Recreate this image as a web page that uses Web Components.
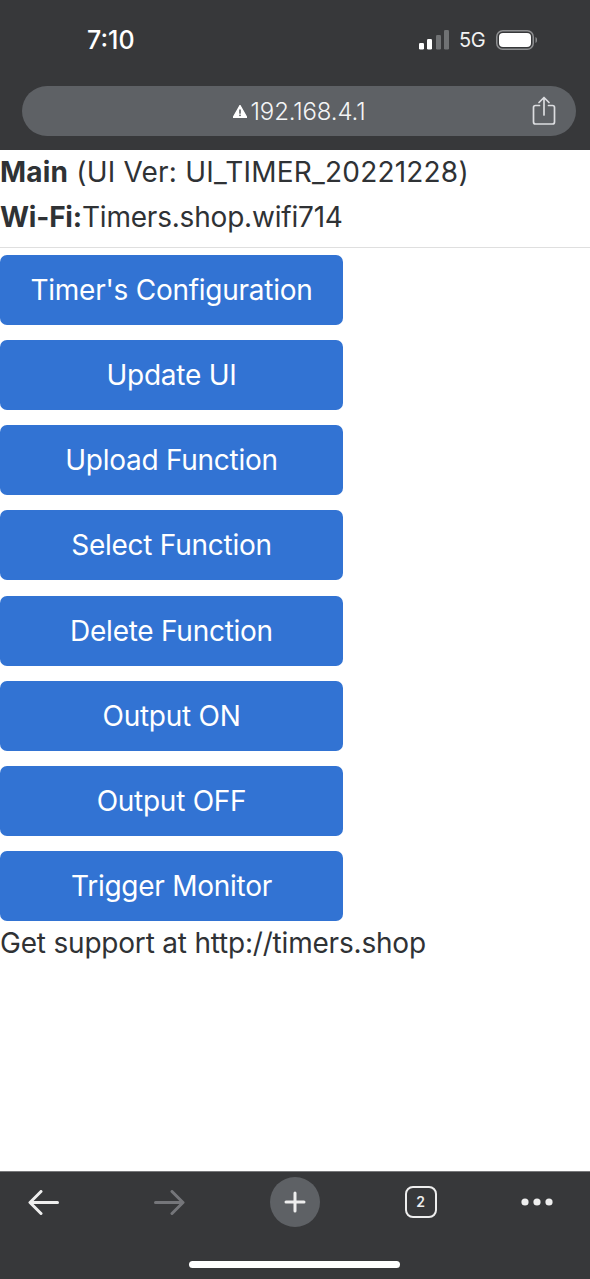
<!DOCTYPE html>
<html lang="en">
<head>
<meta charset="utf-8">
<title>Main</title>
<style>
  html, body { margin: 0; padding: 0; background: #fff; }
  body { font-family: Inter, "Liberation Sans", sans-serif; width: 590px; height: 1279px; overflow: hidden; }
  app-screen { height: 1279px; }
  .wide { --track: 0.2px; }
</style>
</head>
<body>
<app-screen>
  <browser-top slot="top" time="7:10" address="192.168.4.1"></browser-top>
  <info-line class="wide"><b>Main</b> (UI Ver: UI_TIMER_20221228)</info-line>
  <info-line><b>Wi-Fi:</b>Timers.shop.wifi714</info-line>
  <page-rule></page-rule>
  <action-button>Timer's Configuration</action-button>
  <action-button>Update UI</action-button>
  <action-button>Upload Function</action-button>
  <action-button>Select Function</action-button>
  <action-button>Delete Function</action-button>
  <action-button>Output ON</action-button>
  <action-button>Output OFF</action-button>
  <action-button>Trigger Monitor</action-button>
  <info-line>Get support at http://timers.shop</info-line>
  <browser-bottom slot="bottom" tabs="2"></browser-bottom>
</app-screen>

<script>
// Page frame: browser chrome on top and bottom, the web content between them
class AppScreen extends HTMLElement {
  constructor() {
    super();
    this.attachShadow({ mode: 'open' });
    this.shadowRoot.innerHTML = `
      <style>
        :host { display: flex; flex-direction: column; width: 590px; }
        main { flex: 1; display: flex; flex-direction: column; background: #fff; min-height: 0; }
      </style>
      <slot name="top"></slot>
      <main><slot></slot></main>
      <slot name="bottom"></slot>
    `;
  }
}

class BrowserTop extends HTMLElement {
  constructor() {
    super();
    this.attachShadow({ mode: 'open' });
    const time = this.getAttribute('time');
    const address = this.getAttribute('address');
    this.shadowRoot.innerHTML = `
      <style>
        :host { display: block; height: 150px; box-sizing: border-box; padding: 0 14px 14px 22px; background: #37383a; color: #fff; }
        .status { height: 86px; box-sizing: border-box; padding: 24px 38px 0 65px; display: flex; align-items: flex-start; justify-content: space-between; }
        .time { font-size: 25px; line-height: 32px; font-weight: 500; width: 50px; }
        .right { display: flex; align-items: center; height: 32px; }
        .net { font-size: 20px; font-weight: 400; line-height: 32px; color: #f2f2f2; width: 26px; margin: 0 11px 0 10px; letter-spacing: -0.3px; white-space: nowrap; }
        svg { display: block; }
        .pill { height: 50px; border-radius: 25px; background: #5e6165; display: flex; align-items: center; position: relative; justify-content: center; }
        .addr { display: flex; align-items: center; gap: 4px; font-size: 24px; font-weight: 300; color: #f4f5f6; }
        .addr span { letter-spacing: -0.15px; }
        .share { position: absolute; right: 20px; top: 10px; }
      </style>
      <div class="status">
        <div class="time">${time}</div>
        <div class="right">
          <svg width="30" height="20" viewBox="0 0 30 20">
            <rect x="0" y="13" width="5" height="6.5" rx="1.2" fill="#fff"/>
            <rect x="8" y="9" width="5" height="10.5" rx="1.2" fill="#fff"/>
            <rect x="17" y="5" width="5" height="14.5" rx="1.2" fill="#707274"/>
            <rect x="25" y="0" width="5" height="19.5" rx="1.2" fill="#707274"/>
          </svg>
          <span class="net">5G</span>
          <svg width="42" height="20" viewBox="0 0 42 20">
            <rect x="0.75" y="0.75" width="36.5" height="18.5" rx="6" fill="none" stroke="#8e8f91" stroke-width="1.5"/>
            <rect x="3" y="3" width="32" height="14" rx="4" fill="#fff"/>
            <path d="M39.5 7 C41.5 7.6 41.5 12.4 39.5 13 Z" fill="#8e8f91"/>
          </svg>
        </div>
      </div>
      <div class="pill">
        <div class="addr">
          <svg width="14" height="13" viewBox="0 0 14 13">
            <path d="M7 0.5 L13.8 12.5 L0.2 12.5 Z" fill="#fff" stroke="#fff" stroke-width="1.4" stroke-linejoin="round"/>
            <rect x="6.2" y="4.5" width="1.6" height="4.2" fill="#5e6165"/>
            <rect x="6.2" y="9.6" width="1.6" height="1.5" fill="#5e6165"/>
          </svg>
          <span>${address}</span>
        </div>
        <svg class="share" width="24" height="30" viewBox="0 0 24 30" fill="none" stroke="#dcdde0" stroke-width="1.7" stroke-linecap="round" stroke-linejoin="round">
          <path d="M7.5 9.5 H3.5 a2 2 0 0 0 -2 2 V26 a2 2 0 0 0 2 2 H20.5 a2 2 0 0 0 2 -2 V11.5 a2 2 0 0 0 -2 -2 H16.5"/>
          <path d="M12 19 V2 M7 6.5 L12 1.5 L17 6.5"/>
        </svg>
      </div>
    `;
  }
}

// One line of plain page text, bold parts come in through the slot
const infoTemplate = document.createElement('template');
infoTemplate.innerHTML = `
  <style>
    :host { display: block; font-size: 28px; line-height: 45px; height: 45px; color: #2f3235; white-space: nowrap; letter-spacing: var(--track, -0.2px); }
    ::slotted(b) { font-weight: 700; }
  </style>
  <slot></slot>
`;
class InfoLine extends HTMLElement {
  constructor() {
    super();
    this.attachShadow({ mode: 'open' });
    this.shadowRoot.appendChild(infoTemplate.content.cloneNode(true));
  }
}

class PageRule extends HTMLElement {
  constructor() {
    super();
    this.attachShadow({ mode: 'open' });
    this.shadowRoot.innerHTML = `
      <style>
        :host { display: block; height: 1px; margin: 7px 0 7px; background: #dfdfdf; }
      </style>
    `;
  }
}

const buttonTemplate = document.createElement('template');
buttonTemplate.innerHTML = `
  <style>
    :host { display: block; width: 343px; margin-bottom: 15.15px; }
    :host(:last-of-type) { margin-bottom: 0; }
    button {
      display: block; width: 100%; height: 70px; padding: 0; border: 0; border-radius: 7px;
      background: #3273d3; color: #fff; font: 400 28px/40px Inter, "Liberation Sans", sans-serif;
      letter-spacing: -0.26px; text-align: center;
    }
  </style>
  <button type="button"><slot></slot></button>
`;
class ActionButton extends HTMLElement {
  constructor() {
    super();
    this.attachShadow({ mode: 'open' });
    this.shadowRoot.appendChild(buttonTemplate.content.cloneNode(true));
  }
}

class BrowserBottom extends HTMLElement {
  constructor() {
    super();
    this.attachShadow({ mode: 'open' });
    const tabs = this.getAttribute('tabs');
    this.shadowRoot.innerHTML = `
      <style>
        :host { display: block; height: 108px; box-sizing: border-box; background: #37383a; border-top: 1px solid #77787a; }
        .tools { height: 61px; padding-top: 5px; box-sizing: border-box; display: grid; grid-template-columns: 87px 165px 86px 165px 67px; }
        .tools > div { display: flex; align-items: center; justify-content: center; height: 50px; }
        svg { display: block; }
        .plus { width: 50px; height: 50px; border-radius: 50%; background: #5e6165; display: flex; align-items: center; justify-content: center; }
        .tabs { width: 32px; height: 32px; box-sizing: border-box; border: 2.5px solid #eeeeee; border-radius: 8px; color: #eee; font-size: 14px; font-weight: 600; line-height: 27px; text-align: center; }
        .home { width: 211px; height: 7px; border-radius: 4px; background: #fff; margin: 28px 0 0 189px; }
      </style>
      <div class="tools">
        <div>
          <svg width="31" height="25" viewBox="0 0 31 25" fill="none" stroke="#eee" stroke-width="3" stroke-linecap="round" stroke-linejoin="round">
            <path d="M29.5 12.5 H2.5 M13 1.5 L2 12.5 L13 23.5"/>
          </svg>
        </div>
        <div>
          <svg width="31" height="25" viewBox="0 0 31 25" fill="none" stroke="#75767a" stroke-width="3" stroke-linecap="round" stroke-linejoin="round">
            <path d="M1.5 12.5 H28.5 M18 1.5 L29 12.5 L18 23.5"/>
          </svg>
        </div>
        <div>
          <div class="plus">
            <svg width="22" height="22" viewBox="0 0 22 22" fill="none" stroke="#eee" stroke-width="3" stroke-linecap="round">
              <path d="M11 2 V20 M2 11 H20"/>
            </svg>
          </div>
        </div>
        <div><div class="tabs">${tabs}</div></div>
        <div>
          <svg width="32" height="8" viewBox="0 0 32 8" fill="#eee">
            <circle cx="4" cy="4" r="3.6"/><circle cx="16" cy="4" r="3.6"/><circle cx="28" cy="4" r="3.6"/>
          </svg>
        </div>
      </div>
      <div class="home"></div>
    `;
  }
}

customElements.define('app-screen', AppScreen);
customElements.define('browser-top', BrowserTop);
customElements.define('info-line', InfoLine);
customElements.define('page-rule', PageRule);
customElements.define('action-button', ActionButton);
customElements.define('browser-bottom', BrowserBottom);
</script>
</body>
</html>
